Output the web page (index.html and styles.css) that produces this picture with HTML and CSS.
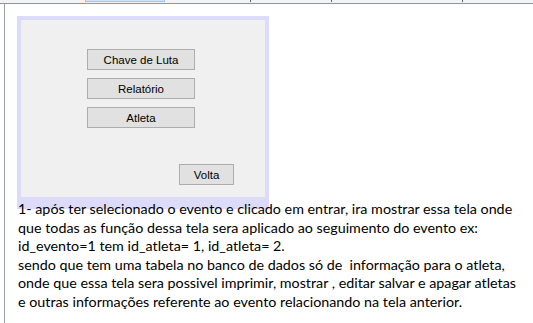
FILE: index.html
```html
<!DOCTYPE html>
<html>
<head>
<meta charset="utf-8">
<link rel="stylesheet" href="styles.css">
</head>
<body>
<div class="ruler">
  <span class="tab"></span>
  <span class="tick t1"></span>
  <span class="tick t2"></span>
  <span class="tick t3"></span>
</div>
<div class="doc">
  <div class="panel">
    <div class="menu">
      <div class="btn">Chave de Luta</div>
      <div class="btn">Relatório</div>
      <div class="btn">Atleta</div>
    </div>
    <div class="btn volta">Volta</div>
  </div>
  <p class="text">1- após ter selecionado o evento e clicado em entrar, ira mostrar essa tela onde<br>que todas as função dessa tela sera aplicado ao seguimento do evento ex:<br>id_evento=1 tem id_atleta= 1, id_atleta= 2.<br>sendo que tem uma tabela no banco de dados só de&nbsp; informação para o atleta,<br>onde que essa tela sera possivel imprimir, mostrar , editar salvar e apagar atletas<br>e outras informações referente ao evento relacionando na tela anterior.</p>
</div>
</body>
</html>
```

FILE: styles.css
```css
html, body {
  margin: 0;
  background: #ffffff;
}
body {
  width: 533px;
  height: 323px;
  overflow: hidden;
}
.ruler {
  display: flex;
  height: 3px;
  background: #f3f3f3;
  border-bottom: 1px solid #8697aa;
}
.tab {
  width: 78px;
  height: 1px;
  margin-left: 85px;
  background: #cde5f8;
  border: 1px solid #9ac8ee;
  border-top: none;
}
.tick {
  width: 1px;
  height: 2px;
  background: #606060;
}
.t1 { margin-left: 85px; }
.t2 { margin-left: 80px; }
.t3 { margin-left: 130px; }
.doc {
  margin-left: 4px;
  border-left: 1px solid #98a2ad;
  padding: 12px 0 0 12px;
  height: 319px;
  box-sizing: border-box;
}
.panel {
  width: 244px;
  height: 148px;
  background: #f0f0f0;
  border: 4px solid #dcdcfa;
  border-bottom-width: 12px;
  padding-top: 29px;
  font-family: "Liberation Sans", Arial, sans-serif;
  font-size: 11.5px;
  color: #000;
}
.menu {
  display: flex;
  flex-direction: column;
  gap: 8px;
  margin-left: 66px;
  width: 108px;
}
.btn {
  box-sizing: border-box;
  height: 21px;
  background: #e1e1e1;
  border: 1px solid #adadad;
  display: flex;
  align-items: center;
  justify-content: center;
}
.volta {
  width: 55px;
  margin-left: 158px;
  margin-top: 36px;
}
.text {
  margin: -9px 0 0 0;
  padding-left: 1px;
  font-family: Lato, "Open Sans", sans-serif;
  font-size: 14.3px;
  line-height: 18.5px;
  color: #000;
}
```
